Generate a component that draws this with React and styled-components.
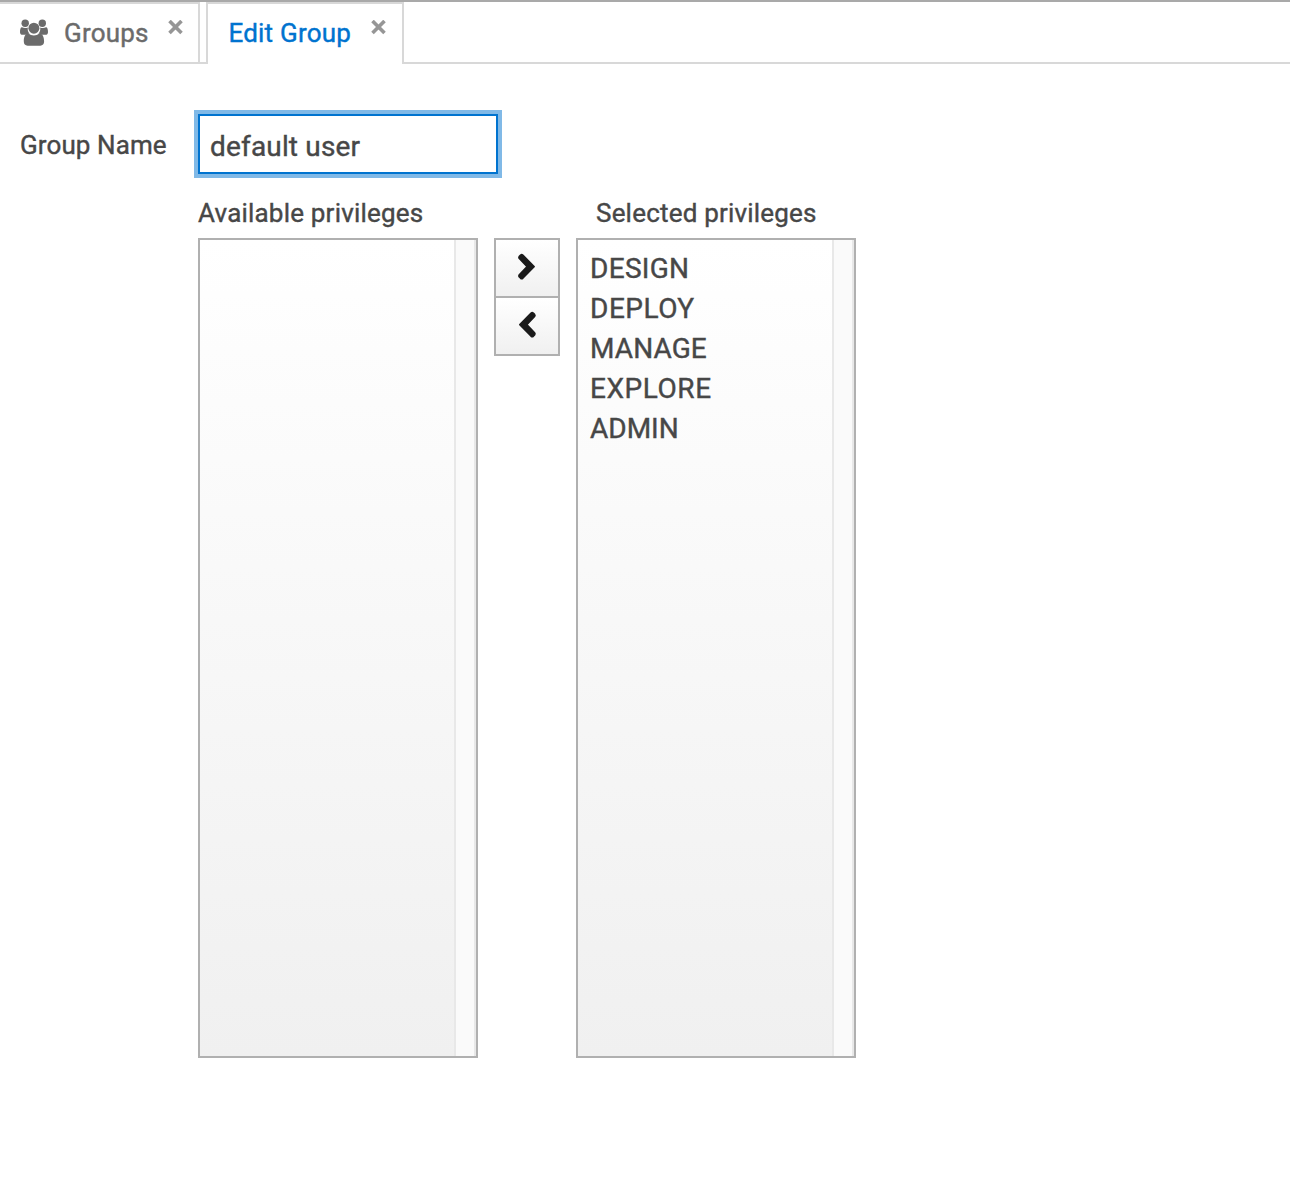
import React, { useState } from "react";
import styled, { createGlobalStyle } from "styled-components";

const GlobalStyle = createGlobalStyle`
  *, *::before, *::after { box-sizing: border-box; }
  body {
    margin: 0;
    background: #fff;
    color: #474747;
    font-family: Roboto, "Liberation Sans", sans-serif;
    font-size: 26px;
    -webkit-text-stroke: 0.4px currentColor;
  }
  svg { display: block; }
`;

const Page = styled.main`
  min-height: 1194px;
  border-top: 2px solid #a9a9a9;
`;

const TabBar = styled.nav`
  display: flex;
  height: 62px;
`;

const Tab = styled.div`
  display: flex;
  align-items: flex-start;
  width: ${(p) => p.$width}px;
  padding: 14px 0 0 ${(p) => (p.$first ? 20 : 20.5)}px;
  color: ${(p) => (p.$active ? "#0073cf" : "#6b6b6b")};
  border: 2px solid #d8d8d8;
  border-left-width: ${(p) => (p.$first ? 0 : 2)}px;
  ${(p) => p.$active && "border-bottom-width: 0;"}
`;

const TabGap = styled.div`
  width: ${(p) => (p.$wide ? "auto" : "6px")};
  flex: ${(p) => (p.$wide ? "1" : "none")};
  border-bottom: 2px solid #d8d8d8;
`;

const TabLabel = styled.span`
  width: ${(p) => p.$width}px;
  margin-left: ${(p) => p.$indent || 0}px;
  line-height: 30px;
  letter-spacing: 0.2px;
  white-space: nowrap;
`;

const CloseIcon = styled.svg`
  margin: 2px 0 0 20px;
`;

const Form = styled.form`
  display: grid;
  grid-template-columns: 178px 1fr;
  padding: 50px 0 0 20px;
`;

const FieldLabel = styled.label`
  line-height: 62px;
  height: 60px;
  letter-spacing: 0.1px;
  white-space: nowrap;
`;

const TextInput = styled.input`
  width: 300px;
  height: 60px;
  padding: 5px 10px 0;
  border: 2px solid #0073cf;
  outline: none;
  box-shadow: 0 0 0 4px #80b9e7;
  background: #fff;
  color: #474747;
  font: 400 28px Roboto, "Liberation Sans", sans-serif;
  letter-spacing: 0.17px;
`;

const PickList = styled.div`
  grid-column: 2;
  display: flex;
  gap: 16px;
  padding-top: 22px;
`;

const Column = styled.section`
  width: 280px;
`;

const ColumnTitle = styled.div`
  height: 42px;
  padding-left: ${(p) => p.$indent || 0}px;
  line-height: 34px;
  letter-spacing: 0.2px;
  white-space: nowrap;
`;

const ListBox = styled.div`
  display: flex;
  height: 820px;
  border: 2px solid #b0b0b0;
  background: linear-gradient(#fff, #f0f0f0);
`;

const Options = styled.ul`
  flex: 1;
  margin: 0;
  padding: 9px 12px;
  list-style: none;
  font-size: 28px;
  line-height: 40px;
`;

const Option = styled.li`
  letter-spacing: ${(p) => p.$tracking}px;
`;

const ScrollTrack = styled.div`
  width: 22px;
  border: solid #e8e8e8;
  border-width: 0 2px;
  background: #fafafa;
`;

const Controls = styled.div`
  width: 66px;
  height: 118px;
  margin-top: 42px;
  border: 2px solid #b0b0b0;
`;

const MoveButton = styled.button`
  display: block;
  width: 62px;
  height: ${(p) => (p.$divided ? 58 : 56)}px;
  padding: 0;
  border: 0;
  border-bottom: ${(p) => (p.$divided ? "2px solid #b0b0b0" : "0")};
  background: linear-gradient(#fff, #f0f0f0);
`;

function Close() {
  return (
    <CloseIcon width="15" height="15" viewBox="0 0 15 15">
      <path d="M1.5 1L13.5 13M13.5 1L1.5 13" stroke="#969696" strokeWidth="3.6" />
    </CloseIcon>
  );
}

function UsersIcon() {
  return (
    <svg width="28" height="30" viewBox="0 0 28 30" fill="#6b6b6b">
      <circle cx="5.2" cy="5.3" r="3.7" />
      <circle cx="22.3" cy="5.3" r="3.7" />
      <path d="M2 9.2C3 9.8 4 10 5 10C6.1 10 7.2 9.8 7.8 9.4C7.4 12 8.2 14.3 9.6 15.7C8.3 15.7 7 16 6.1 16.8H2.8C1 16.8 0 15.9 0 14.2C0 11.3.5 9.2 2 9.2Z" />
      <path d="M26 9.2C25 9.8 24 10 23 10C21.9 10 20.8 9.8 20.2 9.4C20.6 12 19.8 14.3 18.4 15.7C19.7 15.7 21 16 21.9 16.8H25.2C27 16.8 28 15.9 28 14.2C28 11.3 27.5 9.2 26 9.2Z" />
      <circle cx="13.9" cy="10.2" r="5.5" />
      <path d="M8.5 15.6C10 16.9 11.8 17.6 13.9 17.6C16 17.6 17.8 16.9 19.3 15.6C22.6 15.6 24.1 19 24.1 23.6C24.1 26.1 22.7 27.7 20.3 27.7H7.6C5.1 27.7 3.8 26.1 3.8 23.6C3.8 19 5.1 15.6 8.5 15.6Z" />
    </svg>
  );
}

const CHEVRONS = {
  right:
    "M38 26.7L26.7 38.2Q25.7 39 24.7 38.2L23.4 36.9Q22.6 35.9 23.4 34.9L31.2 26.7L23.4 18.5Q22.6 17.5 23.4 16.5L24.7 15.2Q25.7 14.4 26.7 15.2Z",
  left:
    "M23.9 26.7L35.2 15.2Q36.2 14.4 37.2 15.2L38.5 16.5Q39.3 17.5 38.5 18.5L30.7 26.7L38.5 34.9Q39.3 35.9 38.5 36.9L37.2 38.2Q36.2 39 35.2 38.2Z",
};

function Chevron({ direction }) {
  return (
    <svg width="62" height="56" viewBox="0 0 62 56" fill="#1b1b1b" stroke="#1b1b1b" strokeWidth="1.8" strokeLinejoin="round">
      <path d={CHEVRONS[direction]} />
    </svg>
  );
}

function PrivilegeList({ title, items, indent }) {
  return (
    <Column>
      <ColumnTitle $indent={indent}>{title}</ColumnTitle>
      <ListBox>
        <Options>
          {items.map((item) => (
            <Option key={item.name} $tracking={item.tracking}>
              {item.name}
            </Option>
          ))}
        </Options>
        <ScrollTrack />
      </ListBox>
    </Column>
  );
}

const SELECTED = [
  { name: "DESIGN", tracking: 0.3 },
  { name: "DEPLOY", tracking: 0.5 },
  { name: "MANAGE", tracking: 0.1 },
  { name: "EXPLORE", tracking: 0.55 },
  { name: "ADMIN", tracking: 0 },
];

export default function App() {
  const [name, setName] = useState("default user");
  return (
    <>
      <GlobalStyle />
      <Page>
        <TabBar>
          <Tab $first $width={200}>
            <UsersIcon />
            <TabLabel $indent={16} $width={84}>Groups</TabLabel>
            <Close />
          </Tab>
          <TabGap />
          <Tab $active $width={198}>
            <TabLabel $width={122.5}>Edit Group</TabLabel>
            <Close />
          </Tab>
          <TabGap $wide />
        </TabBar>
        <Form>
          <FieldLabel htmlFor="group-name">Group Name</FieldLabel>
          <TextInput id="group-name" value={name} onChange={(e) => setName(e.target.value)} />
          <PickList>
            <PrivilegeList title="Available privileges" items={[]} />
            <Controls>
              <MoveButton type="button" aria-label="Add" $divided>
                <Chevron direction="right" />
              </MoveButton>
              <MoveButton type="button" aria-label="Remove">
                <Chevron direction="left" />
              </MoveButton>
            </Controls>
            <PrivilegeList title="Selected privileges" indent={20} items={SELECTED} />
          </PickList>
        </Form>
      </Page>
    </>
  );
}
